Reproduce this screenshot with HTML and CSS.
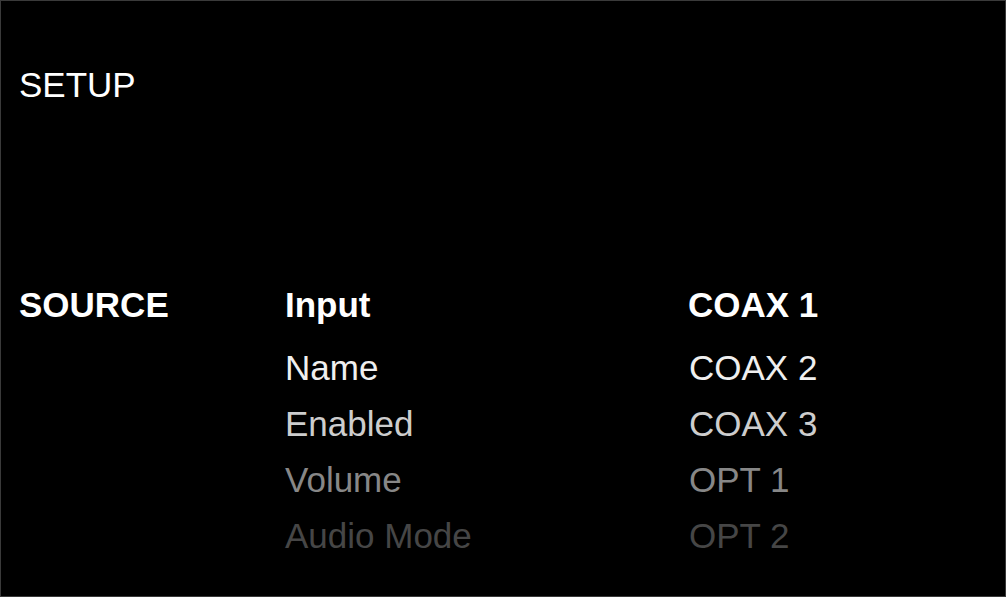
FILE: index.html
```html
<!DOCTYPE html>
<html lang="en">
<head>
<meta charset="utf-8">
<title>Setup</title>
<link rel="stylesheet" href="styles.css">
</head>
<body>
<div class="screen">
  <h1 class="title">SETUP</h1>
  <div class="menu">
    <div class="section">SOURCE</div>
    <div class="list">
      <div class="row current"><span class="key">Input</span><span class="val">COAX 1</span></div>
      <div class="row level1"><span class="key">Name</span><span class="val">COAX 2</span></div>
      <div class="row level2"><span class="key">Enabled</span><span class="val">COAX 3</span></div>
      <div class="row level3"><span class="key">Volume</span><span class="val">OPT 1</span></div>
      <div class="row level4"><span class="key">Audio Mode</span><span class="val">OPT 2</span></div>
    </div>
  </div>
</div>
</body>
</html>
```
FILE: styles.css
```css
html, body {
  margin: 0;
  padding: 0;
  background: #000;
}
.screen {
  box-sizing: border-box;
  width: 1006px;
  height: 597px;
  border: 1px solid #3a3a3a;
  background: #000;
  padding: 65px 0 0 18px;
  font-family: "Liberation Sans", Arial, sans-serif;
  font-size: 35px;
  color: #fff;
  overflow: hidden;
}
.title {
  margin: 0;
  font-size: 35px;
  font-weight: normal;
  line-height: 38px;
  color: #fff;
}
.menu {
  display: flex;
  margin-top: 173px;
}
.section {
  width: 266px;
  font-weight: bold;
  line-height: 56px;
  color: #fff;
}
.list {
  display: flex;
  flex-direction: column;
}
.row {
  display: flex;
  line-height: 56px;
}
.key {
  width: 404px;
}
.current {
  font-weight: bold;
  color: #fff;
  padding-bottom: 7px;
}
.current .val {
  margin-left: -1px;
}
.level1 { color: #efefef; }
.level2 { color: #cdcdcd; }
.level3 { color: #878787; }
.level4 { color: #464646; }
```
